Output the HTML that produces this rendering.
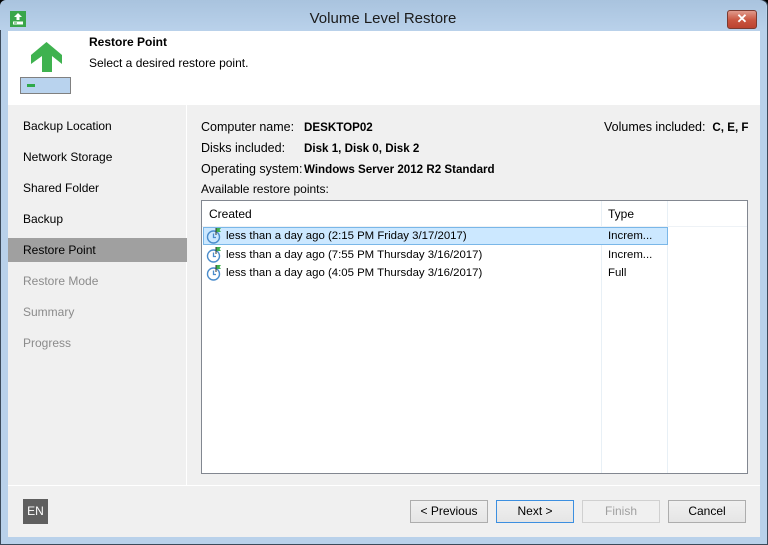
<!DOCTYPE html>
<html><head><meta charset="utf-8"><style>
*{margin:0;padding:0;box-sizing:border-box}
body{width:768px;height:545px;overflow:hidden;font-family:"Liberation Sans",sans-serif;font-size:12px;color:#000;background:#000;position:relative}
.frame{position:absolute;left:0;top:0;width:768px;height:545px;background:#b9d1ea;border:1px solid #3c4a5a;border-radius:6px 6px 0 0}
.title{position:absolute;left:0;top:0;width:766px;height:30px;background:linear-gradient(#a9c3de,#b9d1ea);border-radius:6px 6px 0 0}
.title span{position:absolute;left:0;width:766px;text-align:center;top:10px;font-size:15px;color:#1b1b1b}
.close{position:absolute;left:727px;top:10px;width:30px;height:19px;background:linear-gradient(#e09a8c,#c9543f 55%,#bb4330);border:1px solid #7a3a30;border-radius:3px;color:#fff;text-align:center;font-weight:bold;font-size:13px;line-height:16px}
.client{position:absolute;left:8px;top:31px;width:752px;height:506px;background:#f0f0f0}
.hdr{position:absolute;left:0;top:0;width:752px;height:74px;background:#fff}
.nav{position:absolute;left:0;top:74px;width:179px;height:380px;background:#f0f0f0;border-right:1px solid #fff}
.nav div{position:absolute;left:15px;height:24px;line-height:24px;font-size:12px}
.nav .dis{color:#8b8b8b}
.sel{position:absolute;left:0;top:133px;width:179px;height:24px;background:#a0a0a0}
.lbl{position:absolute;font-size:12.5px}
.b{font-weight:bold;font-size:11.6px;margin-top:1px}
.r{font-size:11.4px;margin-top:1px}
.tbl{position:absolute;left:193px;top:169px;width:547px;height:274px;background:#fff;border:1px solid #828790}
.btn{position:absolute;top:469px;height:23px;width:78px;border:1px solid #adadad;background:linear-gradient(#f0f0f0,#e5e5e5);text-align:center;line-height:21px;font-size:12px}
</style></head><body>
<div class="frame"></div>
<div class="title"><span>Volume Level Restore</span>
<svg style="position:absolute;left:10px;top:11px" width="16" height="16"><rect width="16" height="16" fill="#3aa64a"/><path d="M8 2 L12 6 H9.5 V9 H6.5 V6 H4 Z" fill="#fff"/><rect x="3" y="10.5" width="10" height="3" fill="#fff"/><rect x="4" y="11.5" width="3" height="1" fill="#3aa64a"/></svg>
</div>
<div class="close">✕</div>
<div class="client">
 <div class="hdr">
  <svg style="position:absolute;left:11px;top:10px" width="54" height="54"><path d="M27.5 1 L43 14 V23 L33 15 V31 H23 V15 L12 23 V14 Z" fill="#3fb24f"/><rect x="1.5" y="36.5" width="50" height="16" fill="#b9d3ee" stroke="#808080"/><rect x="8" y="43" width="8" height="3" fill="#2fa94a"/></svg>
  <div class="lbl" style="left:81px;top:4px;font-weight:bold;font-size:12px">Restore Point</div>
  <div class="lbl" style="left:81px;top:25px;font-size:12px">Select a desired restore point.</div>
 </div>
 <div class="nav">
  <div style="top:9px">Backup Location</div>
  <div style="top:40px">Network Storage</div>
  <div style="top:71px">Shared Folder</div>
  <div style="top:102px">Backup</div>
  <span class="sel"></span>
  <div style="top:133px">Restore Point</div>
  <div class="dis" style="top:164px">Restore Mode</div>
  <div class="dis" style="top:195px">Summary</div>
  <div class="dis" style="top:226px">Progress</div>
 </div>
 <div class="lbl" style="left:193px;top:89px">Computer name:</div>
 <div class="lbl b" style="left:296px;top:89px">DESKTOP02</div>
 <div class="lbl" style="left:596px;top:89px">Volumes included:&nbsp; <b style="font-size:11.6px">C, E, F</b></div>
 <div class="lbl" style="left:193px;top:110px">Disks included:</div>
 <div class="lbl b" style="left:296px;top:110px">Disk 1, Disk 0, Disk 2</div>
 <div class="lbl" style="left:193px;top:131px">Operating system:</div>
 <div class="lbl b" style="left:296px;top:131px">Windows Server 2012 R2 Standard</div>
 <div class="lbl" style="left:193px;top:151px;font-size:12px">Available restore points:</div>
 <div class="tbl">
  <div style="position:absolute;left:399px;top:0;width:1px;height:272px;background:#e8f0f6"></div>
  <div style="position:absolute;left:465px;top:0;width:1px;height:272px;background:#e8f0f6"></div>
  <div style="position:absolute;left:0;top:25px;width:545px;height:1px;background:#eef2f6"></div>
  <div class="lbl" style="left:7px;top:6px;font-size:12px">Created</div>
  <div class="lbl" style="left:406px;top:6px;font-size:12px">Type</div>
  <div style="position:absolute;left:1px;top:26px;width:465px;height:18px;background:#cce8ff;border:1px solid #7ab7e8"></div>
  <svg style="position:absolute;left:4px;top:26px" width="18" height="56"><g id="ic"><circle cx="7.5" cy="10" r="6" fill="none" stroke="#4a8ccc" stroke-width="1.4"/><path d="M7.5 6.5V10.5H10" fill="none" stroke="#4a8ccc" stroke-width="1.3"/><path d="M10 1V8" stroke="#333" stroke-width="1"/><path d="M10.5 1H15L13.5 3L15 5H10.5Z" fill="#3fb24f"/></g><use href="#ic" y="19"/><use href="#ic" y="37"/></svg>
  <div class="lbl r" style="left:24px;top:28px">less than a day ago (2:15 PM Friday 3/17/2017)</div>
  <div class="lbl r" style="left:24px;top:47px">less than a day ago (7:55 PM Thursday 3/16/2017)</div>
  <div class="lbl r" style="left:24px;top:65px">less than a day ago (4:05 PM Thursday 3/16/2017)</div>
  <div class="lbl r" style="left:406px;top:28px">Increm...</div>
  <div class="lbl r" style="left:406px;top:47px">Increm...</div>
  <div class="lbl r" style="left:406px;top:65px">Full</div>
 </div>
 <div style="position:absolute;left:0;top:454px;width:752px;height:1px;background:#fff"></div>
 <div style="position:absolute;left:15px;top:468px;width:25px;height:25px;background:#5f5f5f;color:#fff;font-size:12px;line-height:25px;text-align:center">EN</div>
 <div class="btn" style="left:402px">&lt; Previous</div>
 <div class="btn" style="left:488px;border-color:#3c8fe0">Next &gt;</div>
 <div class="btn" style="left:574px;color:#a0a0a0;border-color:#d0d0d0;background:#f0f0f0">Finish</div>
 <div class="btn" style="left:660px">Cancel</div>
</div>
</body></html>
